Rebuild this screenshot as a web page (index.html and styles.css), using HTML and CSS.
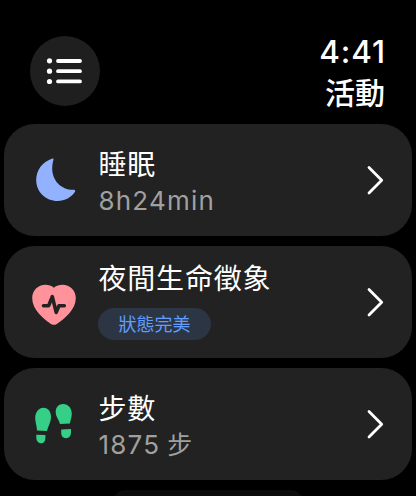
FILE: index.html
```html
<!DOCTYPE html>
<html lang="zh-Hant">
<head>
    <meta charset="UTF-8">
    <title>活動</title>
    <link rel="stylesheet" href="styles.css">
</head>
<body>
    <header>
        <button class="menu" aria-label="選單">
            <svg width="70" height="70" viewBox="0 0 70 70">
                <g fill="#fff">
                    <circle cx="19.5" cy="24.8" r="2.6"/>
                    <circle cx="19.5" cy="35.2" r="2.6"/>
                    <circle cx="19.5" cy="45.5" r="2.6"/>
                </g>
                <path d="M28 25H50M28 35.2H50M28 45.4H50" stroke="#fff" stroke-width="3.8" stroke-linecap="round"/>
            </svg>
        </button>
        <div class="status">
            <div class="time">4:41</div>
            <div class="page">活動</div>
        </div>
    </header>
    <main>
        <section class="card">
            <svg class="icon" width="50" height="50" viewBox="29 155 50 50">
                <path d="M53.4 160C53.8 158.8 53 158.3 51.8 158.7C42.5 161.8 36.2 170 36.2 180C36.2 192 45.8 201 57.5 201C65 201 71.5 197.2 75 191.8C75.7 190.5 74.8 189.6 73.4 189.8C61.5 190 52.5 181 52.2 169C52.2 165.5 52.7 162.5 53.4 160Z" fill="#92b1ff"/>
            </svg>
            <div class="text">
                <div class="title">睡眠</div>
                <div class="value">8h24min</div>
            </div>
            <svg class="arrow" width="20" height="32" viewBox="0 0 20 32"><path d="M3 3.5L15.7 16.2L3 28.9"/></svg>
        </section>
        <section class="card">
            <svg class="icon" width="50" height="50" viewBox="29 277 50 50">
                <path d="M53.9 287.7C51.5 285.5 48.5 284.7 45.5 284.7C38 284.7 32.2 290.5 32.2 298C32.2 309.5 43 318.5 51 323.9Q53.9 325.8 56.8 323.9C65 318.5 75.8 309.5 75.8 298C75.8 290.5 70 284.7 62.3 284.7C59.3 284.7 56.3 285.5 53.9 287.7Z" fill="#ff929a"/>
                <path d="M43.5 305.7H48.7L52.3 296.6L56.2 312.4L59 305.7H64.3" fill="none" stroke="#222" stroke-width="3.6" stroke-linecap="round" stroke-linejoin="round"/>
            </svg>
            <div class="text with-badge">
                <div class="title">夜間生命徵象</div>
                <div class="badge">狀態完美</div>
            </div>
            <svg class="arrow" width="20" height="32" viewBox="0 0 20 32"><path d="M3 3.5L15.7 16.2L3 28.9"/></svg>
        </section>
        <section class="card">
            <svg class="icon" width="50" height="50" viewBox="29 399 50 50">
                <g fill="#36cf87">
                    <path d="M37 430.5C36.9 426 35.2 422.5 35.2 418C35.2 412.2 38.8 407.7 43.5 407.7C48.1 407.7 51 411.5 51 416.8C51 422.2 48.2 426.2 47 431Z"/>
                    <path d="M36.3 434.7L45.4 435V438C45.4 441.3 43.7 443.3 41.1 443.3C38 443.3 36.3 440.5 36.3 437.5Z"/>
                    <path d="M60 424C59 419.4 55.7 417.2 55.7 412C55.7 407.3 58.6 404 63.3 404C68.2 404 71.8 408.3 71.8 413.8C71.8 417.8 70.2 420.5 70 423.4Z"/>
                    <path d="M61.2 429.4L71 428.9V432.5C71 436 68.9 438.2 66 438.2C62.8 438.2 61.2 435.8 61.2 433Z"/>
                </g>
            </svg>
            <div class="text">
                <div class="title">步數</div>
                <div class="value">1875 <span>步</span></div>
            </div>
            <svg class="arrow" width="20" height="32" viewBox="0 0 20 32"><path d="M3 3.5L15.7 16.2L3 28.9"/></svg>
        </section>
        <div class="next"></div>
    </main>
</body>
</html>
```
FILE: styles.css
```css
* {box-sizing:border-box;}
body {
    margin:0;
    height:496px;
    overflow:hidden;
    background:#000;
    color:#fff;
    font-family:Inter, "Noto Sans CJK TC", sans-serif;
}
header {
    display:flex;
    justify-content:space-between;
    height:124px;
    padding:31px 31px 0 30px;
}
.menu {
    width:70px;
    height:70px;
    margin-top:5px;
    padding:0;
    border:0;
    border-radius:50%;
    background:#1f1f1f;
}
.menu svg {
    display:block;
}
.status {
    text-align:right;
    font-weight:500;
}
.time {
    margin-right:-1px;
    font-size:31.5px;
    line-height:42px;
    letter-spacing:.9px;
}
.page {
    font-size:30px;
    line-height:41px;
}
main {
    display:flex;
    flex-direction:column;
    gap:10px;
    padding:0 4.5px 0 4px;
}
.card {
    display:flex;
    align-items:center;
    flex:none;
    height:112px;
    padding:0 25.5px 0 25px;
    border-radius:31px;
    background:#222;
}
.icon {
    flex:none;
    margin-right:19.5px;
}
.text {
    flex:1;
    padding-top:6px;
}
.with-badge {
    padding:0 0 3px;
}
.title {
    font-size:28px;
    line-height:36px;
    letter-spacing:.8px;
    white-space:nowrap;
}
.value {
    color:#a0a0a0;
    font-size:26px;
    line-height:36px;
    letter-spacing:1.2px;
}
.value span {
    margin-left:-1.5px;
    font-size:25px;
    line-height:1;
}
.badge {
    width:113px;
    height:32px;
    margin:11px 0 0 -.5px;
    border-radius:16px;
    background:#2c3544;
    color:#619eff;
    font-size:18px;
    line-height:34px;
    text-align:center;
}
.arrow {
    flex:none;
    fill:none;
    stroke:#fff;
    stroke-width:2.8;
    stroke-linecap:round;
    stroke-linejoin:round;
}
.next {
    flex:none;
    width:192px;
    height:30px;
    margin:0 auto;
    border-radius:14px;
    background:#0b0b0b;
}
```
